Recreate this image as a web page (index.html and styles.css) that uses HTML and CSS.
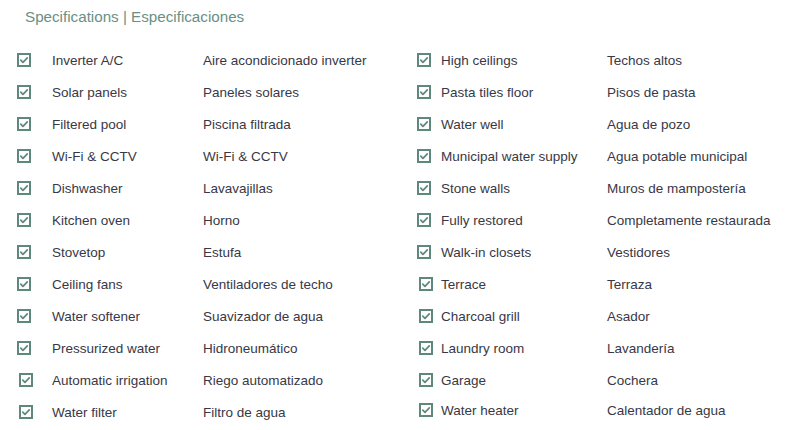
FILE: index.html
```html
<!DOCTYPE html>
<html>
<head>
<meta charset="utf-8">
<link rel="stylesheet" href="styles.css">
</head>
<body>
<div class="page">
  <h2 class="title">Specifications | Especificaciones</h2>
  <div class="cols">
    <ul class="list left">
      <li><span class="cb"><svg viewBox="0 0 14 14"><rect x="1" y="1" width="12" height="12"/><path d="M3.8 7.2 L6 9.3 L10.3 4.8"/></svg></span><span class="en">Inverter A/C</span><span class="es">Aire acondicionado inverter</span></li>
      <li><span class="cb"><svg viewBox="0 0 14 14"><rect x="1" y="1" width="12" height="12"/><path d="M3.8 7.2 L6 9.3 L10.3 4.8"/></svg></span><span class="en">Solar panels</span><span class="es">Paneles solares</span></li>
      <li><span class="cb"><svg viewBox="0 0 14 14"><rect x="1" y="1" width="12" height="12"/><path d="M3.8 7.2 L6 9.3 L10.3 4.8"/></svg></span><span class="en">Filtered pool</span><span class="es">Piscina filtrada</span></li>
      <li><span class="cb"><svg viewBox="0 0 14 14"><rect x="1" y="1" width="12" height="12"/><path d="M3.8 7.2 L6 9.3 L10.3 4.8"/></svg></span><span class="en">Wi-Fi &amp; CCTV</span><span class="es">Wi-Fi &amp; CCTV</span></li>
      <li><span class="cb"><svg viewBox="0 0 14 14"><rect x="1" y="1" width="12" height="12"/><path d="M3.8 7.2 L6 9.3 L10.3 4.8"/></svg></span><span class="en">Dishwasher</span><span class="es">Lavavajillas</span></li>
      <li><span class="cb"><svg viewBox="0 0 14 14"><rect x="1" y="1" width="12" height="12"/><path d="M3.8 7.2 L6 9.3 L10.3 4.8"/></svg></span><span class="en">Kitchen oven</span><span class="es">Horno</span></li>
      <li><span class="cb"><svg viewBox="0 0 14 14"><rect x="1" y="1" width="12" height="12"/><path d="M3.8 7.2 L6 9.3 L10.3 4.8"/></svg></span><span class="en">Stovetop</span><span class="es">Estufa</span></li>
      <li><span class="cb"><svg viewBox="0 0 14 14"><rect x="1" y="1" width="12" height="12"/><path d="M3.8 7.2 L6 9.3 L10.3 4.8"/></svg></span><span class="en">Ceiling fans</span><span class="es">Ventiladores de techo</span></li>
      <li><span class="cb"><svg viewBox="0 0 14 14"><rect x="1" y="1" width="12" height="12"/><path d="M3.8 7.2 L6 9.3 L10.3 4.8"/></svg></span><span class="en">Water softener</span><span class="es">Suavizador de agua</span></li>
      <li><span class="cb"><svg viewBox="0 0 14 14"><rect x="1" y="1" width="12" height="12"/><path d="M3.8 7.2 L6 9.3 L10.3 4.8"/></svg></span><span class="en">Pressurized water</span><span class="es">Hidroneumático</span></li>
      <li class="shift"><span class="cb"><svg viewBox="0 0 14 14"><rect x="1" y="1" width="12" height="12"/><path d="M3.8 7.2 L6 9.3 L10.3 4.8"/></svg></span><span class="en">Automatic irrigation</span><span class="es">Riego automatizado</span></li>
      <li class="shift"><span class="cb"><svg viewBox="0 0 14 14"><rect x="1" y="1" width="12" height="12"/><path d="M3.8 7.2 L6 9.3 L10.3 4.8"/></svg></span><span class="en">Water filter</span><span class="es">Filtro de agua</span></li>
    </ul>
    <ul class="list right">
      <li><span class="cb"><svg viewBox="0 0 14 14"><rect x="1" y="1" width="12" height="12"/><path d="M3.8 7.2 L6 9.3 L10.3 4.8"/></svg></span><span class="en">High ceilings</span><span class="es">Techos altos</span></li>
      <li><span class="cb"><svg viewBox="0 0 14 14"><rect x="1" y="1" width="12" height="12"/><path d="M3.8 7.2 L6 9.3 L10.3 4.8"/></svg></span><span class="en">Pasta tiles floor</span><span class="es">Pisos de pasta</span></li>
      <li><span class="cb"><svg viewBox="0 0 14 14"><rect x="1" y="1" width="12" height="12"/><path d="M3.8 7.2 L6 9.3 L10.3 4.8"/></svg></span><span class="en">Water well</span><span class="es">Agua de pozo</span></li>
      <li><span class="cb"><svg viewBox="0 0 14 14"><rect x="1" y="1" width="12" height="12"/><path d="M3.8 7.2 L6 9.3 L10.3 4.8"/></svg></span><span class="en">Municipal water supply</span><span class="es">Agua potable municipal</span></li>
      <li><span class="cb"><svg viewBox="0 0 14 14"><rect x="1" y="1" width="12" height="12"/><path d="M3.8 7.2 L6 9.3 L10.3 4.8"/></svg></span><span class="en">Stone walls</span><span class="es">Muros de mampostería</span></li>
      <li><span class="cb"><svg viewBox="0 0 14 14"><rect x="1" y="1" width="12" height="12"/><path d="M3.8 7.2 L6 9.3 L10.3 4.8"/></svg></span><span class="en">Fully restored</span><span class="es">Completamente restaurada</span></li>
      <li><span class="cb"><svg viewBox="0 0 14 14"><rect x="1" y="1" width="12" height="12"/><path d="M3.8 7.2 L6 9.3 L10.3 4.8"/></svg></span><span class="en">Walk-in closets</span><span class="es">Vestidores</span></li>
      <li class="shift"><span class="cb"><svg viewBox="0 0 14 14"><rect x="1" y="1" width="12" height="12"/><path d="M3.8 7.2 L6 9.3 L10.3 4.8"/></svg></span><span class="en">Terrace</span><span class="es">Terraza</span></li>
      <li class="shift"><span class="cb"><svg viewBox="0 0 14 14"><rect x="1" y="1" width="12" height="12"/><path d="M3.8 7.2 L6 9.3 L10.3 4.8"/></svg></span><span class="en">Charcoal grill</span><span class="es">Asador</span></li>
      <li class="shift"><span class="cb"><svg viewBox="0 0 14 14"><rect x="1" y="1" width="12" height="12"/><path d="M3.8 7.2 L6 9.3 L10.3 4.8"/></svg></span><span class="en">Laundry room</span><span class="es">Lavandería</span></li>
      <li class="shift"><span class="cb"><svg viewBox="0 0 14 14"><rect x="1" y="1" width="12" height="12"/><path d="M3.8 7.2 L6 9.3 L10.3 4.8"/></svg></span><span class="en">Garage</span><span class="es">Cochera</span></li>
      <li class="shift up"><span class="cb"><svg viewBox="0 0 14 14"><rect x="1" y="1" width="12" height="12"/><path d="M3.8 7.2 L6 9.3 L10.3 4.8"/></svg></span><span class="en">Water heater</span><span class="es">Calentador de agua</span></li>
    </ul>
  </div>
</div>
</body>
</html>
```

FILE: styles.css
```css
* { box-sizing: border-box; }
html, body { margin: 0; padding: 0; background: #ffffff; }
body {
  font-family: "Liberation Sans", Arial, Helvetica, sans-serif;
  color: #383846;
  width: 800px;
  height: 430px;
  overflow: hidden;
}
.page { padding: 8px 0 0 0; }
.title {
  margin: 0 0 0 25px;
  font-size: 15.2px;
  font-weight: normal;
  color: #6a8f86;
  line-height: 18px;
  height: 18px;
}
.cols {
  display: grid;
  grid-template-columns: 400px 400px;
  margin-top: 18px;
}
.list {
  list-style: none;
  margin: 0;
  padding: 0;
}
.list li {
  display: grid;
  height: 32px;
  align-items: center;
  font-size: 13.5px;
  padding-left: 17px;
}
.list li.shift { padding-left: 19px; }
.left li { grid-template-columns: 35px 151px auto; }
.left li.shift { grid-template-columns: 33px 151px auto; }
.right li { grid-template-columns: 24px 166px auto; }
.right li.shift { grid-template-columns: 22px 166px auto; }
.cb {
  display: block;
  width: 14px;
  height: 14px;
  margin-top: -1px;
}
.cb svg {
  display: block;
  width: 14px;
  height: 14px;
  fill: none;
  stroke: #5f887c;
}
.cb rect { stroke-width: 2; }
.cb path { stroke-width: 1.7; stroke-linecap: round; stroke-linejoin: round; }
.right li.up { margin-top: -2px; }
.en, .es { white-space: nowrap; }
```
